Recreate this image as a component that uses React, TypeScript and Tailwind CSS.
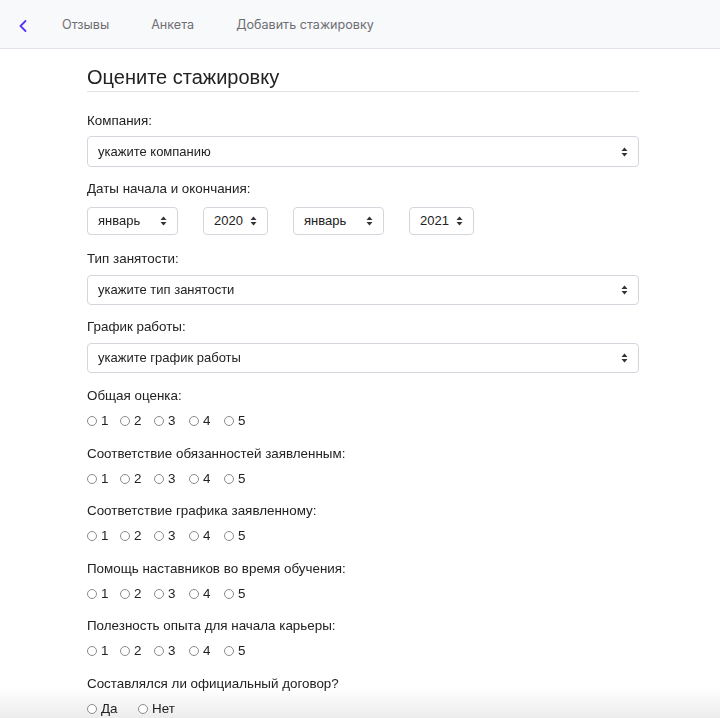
const MONTH_LABEL = "январь";

const SelectArrows = () => (
  <svg width="7" height="10" viewBox="0 0 7 10" className="shrink-0">
    <path d="M3.5 0.5 L6.5 4 L0.5 4 Z" fill="#333" />
    <path d="M3.5 9.5 L6.5 6 L0.5 6 Z" fill="#333" />
  </svg>
);

const FakeSelect = ({ value, className }: { value: string; className: string }) => (
  <div
    className={`flex items-center justify-between border border-[#d3d6dc] rounded-[4px] bg-white pl-[10px] pr-[10px] text-[13px] text-[#222] ${className}`}
  >
    <span>{value}</span>
    <SelectArrows />
  </div>
);

const Radio = ({ label, className }: { label: string; className?: string }) => (
  <label className={`flex items-center gap-[4px] ${className ?? ""}`}>
    <span className="w-[10px] h-[10px] rounded-full border border-[#8a8a8a] bg-white" />
    <span>{label}</span>
  </label>
);

const ratings = [
  "Общая оценка:",
  "Соответствие обязанностей заявленным:",
  "Соответствие графика заявленному:",
  "Помощь наставников во время обучения:",
  "Полезность опыта для начала карьеры:",
];

export default function App() {
  return (
    <div className="h-[718px] overflow-hidden bg-white text-[#222]" style={{ fontFamily: '"Liberation Sans", Arial, sans-serif' }}>
      {/* soft fade at the bottom edge, sits behind the form */}
      <div className="fixed inset-x-0 bottom-0 h-[30px] pointer-events-none bg-gradient-to-b from-white/0 to-[#ececec]" />

      <nav
        className="relative z-10 h-[49px] pt-[3px] bg-[#f8f9fb] border-b border-[#e2e3ea] flex items-center text-[12.6px] text-[#6e6e72]"
        style={{ fontFamily: 'Inter, "Noto Sans", sans-serif' }}
      >
        <svg width="8" height="12" viewBox="0 0 8 12" className="ml-[19px] mr-[35px]">
          <polyline points="6.5,1 1.5,6 6.5,11" fill="none" stroke="#5a35f5" strokeWidth="1.8" strokeLinecap="round" strokeLinejoin="round" />
        </svg>
        <span className="mr-[42px]">Отзывы</span>
        <span className="mr-[42px]">Анкета</span>
        <span>Добавить стажировку</span>
      </nav>

      <main className="relative z-10 w-[552px] ml-[87px] pt-[16px]">
        <h1 className="text-[20px] leading-[24px] pb-[2px] border-b border-[#e2e2e4] text-[#222]">
          Оцените стажировку
        </h1>

        <div className="mt-[21px] text-[13.4px] leading-[16px]">
          <div>Компания:</div>
          <FakeSelect value="укажите компанию" className="mt-[7px] h-[31px] w-full" />

          <div className="mt-[14px]">Даты начала и окончания:</div>
          <div className="mt-[10px] flex gap-[25px]">
            <FakeSelect value={MONTH_LABEL} className="h-[28px] w-[91px]" />
            <FakeSelect value="2020" className="h-[28px] w-[65px]" />
            <FakeSelect value={MONTH_LABEL} className="h-[28px] w-[91px]" />
            <FakeSelect value="2021" className="h-[28px] w-[65px]" />
          </div>

          <div className="mt-[16px]">Тип занятости:</div>
          <FakeSelect value="укажите тип занятости" className="mt-[8px] h-[30px] w-full" />

          <div className="mt-[14px]">График работы:</div>
          <FakeSelect value="укажите график работы" className="mt-[8px] h-[30px] w-full" />

          <div className="mt-[14px] flex flex-col gap-[15.5px]">
            {ratings.map((r) => (
              <div key={r}>
                <div className="leading-[17px]">{r}</div>
                <div className="mt-[9px] flex items-center h-[16px]">
                  <Radio label="1" className="w-[33px]" />
                  <Radio label="2" className="w-[34px]" />
                  <Radio label="3" className="w-[35px]" />
                  <Radio label="4" className="w-[35px]" />
                  <Radio label="5" />
                </div>
              </div>
            ))}

            <div>
              <div className="leading-[17px]">Составлялся ли официальный договор?</div>
              <div className="mt-[9px] flex items-center h-[16px]">
                <Radio label="Да" className="w-[51px]" />
                <Radio label="Нет" />
              </div>
            </div>
          </div>
        </div>
      </main>
    </div>
  );
}
